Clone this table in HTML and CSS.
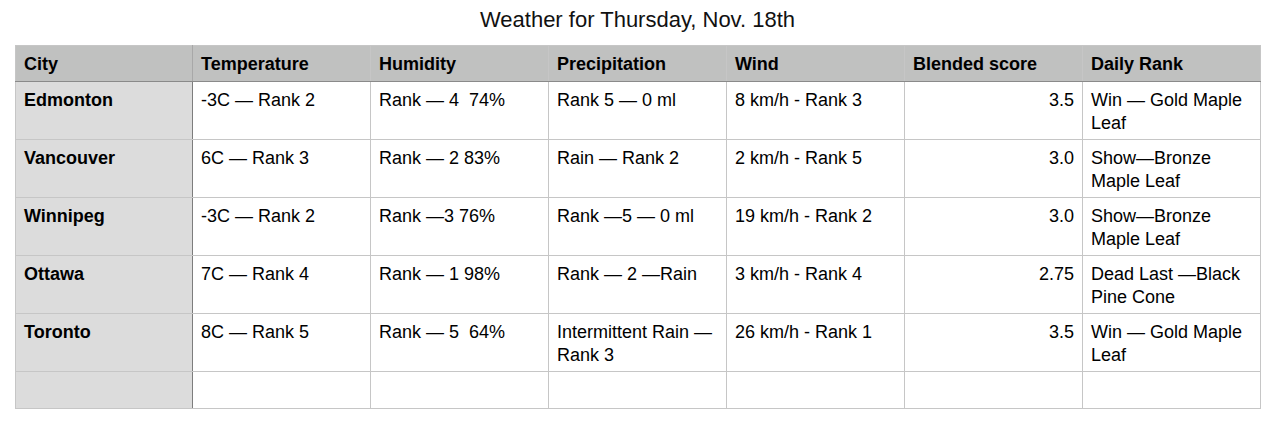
FILE: index.html
```html
<!DOCTYPE html>
<html lang="en">
<head>
<meta charset="utf-8">
<title>Weather for Thursday, Nov. 18th</title>
<link rel="stylesheet" href="styles.css">
</head>
<body>
<main class="page">
  <h1 class="title">Weather for Thursday, Nov. 18th</h1>
  <table class="weather">
    <colgroup>
      <col class="c1"><col class="c2"><col class="c3"><col class="c4"><col class="c5"><col class="c6"><col class="c7">
    </colgroup>
    <thead>
      <tr>
        <th class="city">City</th>
        <th>Temperature</th>
        <th>Humidity</th>
        <th>Precipitation</th>
        <th>Wind</th>
        <th>Blended score</th>
        <th>Daily Rank</th>
      </tr>
    </thead>
    <tbody>
      <tr>
        <th class="city">Edmonton</th>
        <td>-3C — Rank 2</td>
        <td>Rank — 4&nbsp; 74%</td>
        <td>Rank 5 — 0 ml</td>
        <td>8 km/h - Rank 3</td>
        <td class="num">3.5</td>
        <td>Win — Gold Maple Leaf</td>
      </tr>
      <tr>
        <th class="city">Vancouver</th>
        <td>6C — Rank 3</td>
        <td>Rank — 2 83%</td>
        <td>Rain — Rank 2</td>
        <td>2 km/h - Rank 5</td>
        <td class="num">3.0</td>
        <td>Show—Bronze Maple Leaf</td>
      </tr>
      <tr>
        <th class="city">Winnipeg</th>
        <td>-3C — Rank 2</td>
        <td>Rank —3 76%</td>
        <td>Rank —5 — 0 ml</td>
        <td>19 km/h - Rank 2</td>
        <td class="num">3.0</td>
        <td>Show—Bronze Maple Leaf</td>
      </tr>
      <tr>
        <th class="city">Ottawa</th>
        <td>7C — Rank 4</td>
        <td>Rank — 1 98%</td>
        <td>Rank — 2 —Rain</td>
        <td>3 km/h - Rank 4</td>
        <td class="num">2.75</td>
        <td>Dead Last —Black Pine Cone</td>
      </tr>
      <tr>
        <th class="city">Toronto</th>
        <td>8C — Rank 5</td>
        <td>Rank — 5&nbsp; 64%</td>
        <td>Intermittent Rain — Rank 3</td>
        <td>26 km/h - Rank 1</td>
        <td class="num">3.5</td>
        <td>Win — Gold Maple Leaf</td>
      </tr>
      <tr class="empty">
        <th class="city"></th>
        <td></td><td></td><td></td><td></td><td></td><td></td>
      </tr>
    </tbody>
  </table>
</main>
</body>
</html>
```

FILE: styles.css
```css
html, body {
  margin: 0;
  padding: 0;
  background: #ffffff;
}

body {
  font-family: "Liberation Sans", Arial, Helvetica, sans-serif;
  color: #000000;
}

.page {
  padding: 6px 0 0 15px;
}

.title {
  margin: 0;
  width: 1245px;
  text-align: center;
  font-weight: normal;
  font-size: 22px;
  line-height: 28px;
  height: 39px;
  color: #111111;
}

.weather {
  border-collapse: collapse;
  table-layout: fixed;
  width: 1246px;
  font-size: 18px;
  line-height: 23px;
}

.weather col { width: 178px; }
.weather col.c1 { width: 177px; }

.weather th,
.weather td {
  border: 1px solid #c6c6c6;
  padding: 7px 8px 0 8px;
  vertical-align: top;
  text-align: left;
  overflow: hidden;
}

.weather thead th {
  background: #c0c1c0;
  font-weight: bold;
  height: 28px;
  padding-top: 7px;
  border-bottom: 1px solid #8a8a8a;
}

.weather tbody tr { height: 58px; }
.weather tbody tr.empty { height: 37px; }

.weather tbody th.city {
  background: #dcdcdc;
  font-weight: bold;
  border-right: 1px solid #7d7d7d;
}

.weather thead th.city {
  border-right: 1px solid #a8a8a8;
}

.weather td.num {
  text-align: right;
}
```
